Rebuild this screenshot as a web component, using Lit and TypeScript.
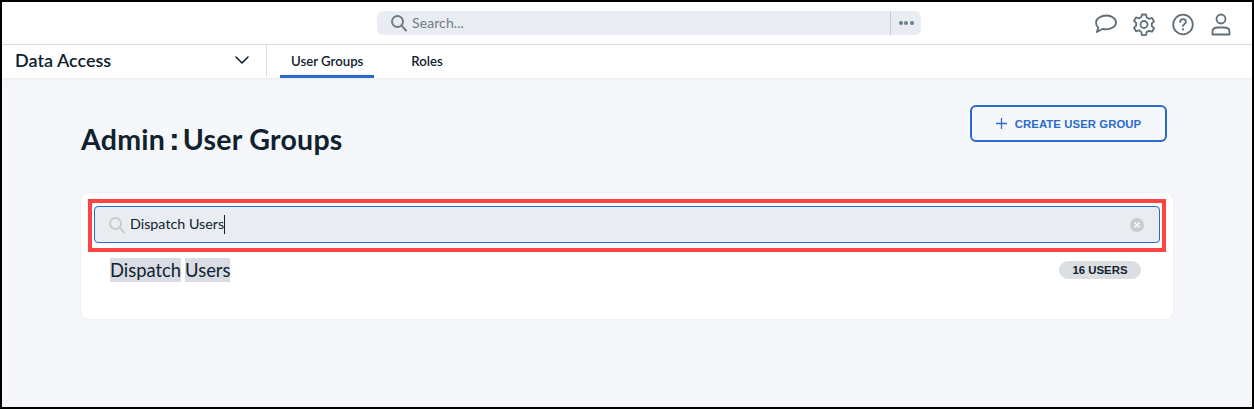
import { LitElement, html, css } from "lit";
import { customElement } from "lit/decorators.js";

@customElement("app-root")
export class AppRoot extends LitElement {
  static styles = css`
    :host { display: block; width: 1254px; height: 409px; box-sizing: border-box; border: 2px solid #000; background: #f5f7fb; font-family: "Lato", "Liberation Sans", sans-serif; color: #10222f; overflow: hidden; }
    .top { height: 42px; background: #fff; border-bottom: 1px solid #dcdfe2; display: grid; grid-template-columns: 375px 544px 1fr; align-items: start; }
    .search { grid-column: 2; height: 24px; margin-top: 9px; background: #e9edf2; border-radius: 6px; display: flex; align-items: center; color: #6e7c87; font-size: 14px; }
    .search .mag { margin-left: 13px; margin-right: 4px; }
    .search .ph { flex: 1; position: relative; top: -1px; letter-spacing: .1px; }
    .search .more { width: 31px; height: 24px; border-left: 1px solid #c8ccd0; box-sizing: border-box; display: flex; align-items: center; justify-content: center; gap: 1.5px; }
    .dot { width: 4px; height: 4px; border-radius: 50%; background: #6e7c87; }
    .icons { display: flex; justify-content: flex-end; gap: 14.5px; padding: 10px 19px 0 0; align-items: center; }
    .icons svg { display: block; }
    .sub { height: 33px; background: #fff; display: flex; box-shadow: 0 1px 2px rgba(0,0,0,.06); }
    .app { flex: none; width: 264px; padding-left: 13px; box-sizing: border-box; height: 29px; display: flex; justify-content: space-between; align-items: center; font-size: 18px; font-weight: 600; }
    .app svg { margin-right: 17px; }
    .tabs { border-left: 1px solid #dcdfe2; height: 32px; padding-left: 13px; display: flex; gap: 26px; flex: 1; }
    .tab { padding: 0 11px; height: 33px; box-sizing: border-box; font-size: 13.2px; font-weight: 600; display: flex; align-items: center; padding-bottom: 1px; }
    .tab.on { border-bottom: 3px solid #2a6bc9; padding: 1px 11px 0; }
    .main { padding: 27px 79px 0 78px; }
    .head { display: flex; justify-content: space-between; height: 88px; padding-right: 6px; }
    h1 { margin: 17px 0 0 1px; font-size: 28.5px; font-weight: 700; line-height: 34px; height: 34px; display: flex; align-items: baseline; letter-spacing: .25px; }
    h1 .sep { margin: 0 3px 0 4px; font-family: "Liberation Sans", sans-serif; font-weight: 700; font-size: 32px; line-height: 34px; letter-spacing: 0; }
    .btn { width: 197px; height: 37px; box-sizing: border-box; border: 2px solid #2a6bc9; border-radius: 6px; color: #2a6bc9; display: flex; align-items: center; justify-content: center; gap: 8px; font-family: "Liberation Sans", sans-serif; font-size: 11.3px; font-weight: 700; letter-spacing: .1px; }
    .card { position: relative; height: 126px; background: #fff; border-radius: 8px; box-shadow: 0 0 3px rgba(0,0,0,.07); padding: 13px 13px 0 13px; box-sizing: border-box; margin-left: 1px; }
    .input { height: 37px; box-sizing: border-box; border: 1px solid #2a6bc9; border-radius: 4px; background: #e9edf2; display: flex; align-items: center; padding: 0 15px 0 13px; font-size: 14.3px; }
    .input .val { flex: 1; margin-left: 4px; display: flex; align-items: center; line-height: 16px; padding-bottom: 1px; }
    .caret { width: 1px; height: 19px; background: #10222f; }
    .clear { width: 14px; height: 14px; border-radius: 50%; background: #c9cbcd; color: #fff; display: flex; align-items: center; justify-content: center; }
    .row { display: flex; justify-content: space-between; align-items: center; padding: 0 19px 0 16px; margin-top: 14px; height: 26px; }
    .name { font-size: 18.4px; display: flex; gap: 4px; line-height: 24px; }
    .name span { background: #d9dde3; }
    .pill { width: 82px; height: 18px; border-radius: 9px; background: #dcdfe2; display: flex; align-items: center; justify-content: center; font-family: "Liberation Sans", sans-serif; font-size: 11.4px; font-weight: 700; }
    .note { position: absolute; left: 7px; top: 6px; width: 1078px; height: 53px; box-sizing: border-box; border: 4px solid #ff4444; pointer-events: none; }
  `;

  render() {
    return html`
      <div class="top">
        <div class="search">
          <svg class="mag" width="18" height="18" viewBox="0 0 18 18" fill="none" stroke="#6e7c87" stroke-width="2" stroke-linecap="round"><circle cx="7.500" cy="7.500" r="5.500"/><path d="M11.600 11.600 16 16.500"/></svg>
          <span class="ph">Search...</span>
          <div class="more"><i class="dot"></i><i class="dot"></i><i class="dot"></i></div>
        </div>
        <div class="icons">
          <svg width="24" height="24" viewBox="0 0 24 24" fill="none" stroke="#5f6e79" stroke-width="1.800" stroke-linejoin="round"><path d="M12.500 3.500c5 0 9.500 2.900 9.500 6.900s-4.500 6.900-9.500 6.900c-1.300 0-2.500-.2-3.600-.5L2.800 20l1.600-4.400C2.700 14.300 2 12.400 2 10.400c0-4 5.500-6.900 10.500-6.900z"/></svg>
          <svg width="24" height="24" viewBox="0 0 24 24" fill="none" stroke="#5f6e79" stroke-width="1.800" stroke-linejoin="round"><path d="M10 2.500h4l.7 3 2.300 1.300 3-.9 2 3.500-2.200 2.100v2.600l2.200 2.100-2 3.500-3-.9-2.300 1.300-.7 3h-4l-.7-3L7 18.300l-3 .9-2-3.500 2.200-2.100v-2.600L2 8.900l2-3.500 3 .9 2.300-1.300z"/><circle cx="12" cy="12.500" r="3.500"/></svg>
          <svg width="24" height="24" viewBox="0 0 24 24" fill="none" stroke="#5f6e79" stroke-width="1.800" stroke-linecap="round"><circle cx="12" cy="12.500" r="9.800"/><path d="M9.200 10c0-1.700 1.300-2.800 2.900-2.800s2.800 1.100 2.800 2.500c0 2.200-2.900 2.300-2.900 4.400"/><path d="M12 17.300v.2" stroke-width="2.200"/></svg>
          <svg width="24" height="24" viewBox="0 0 24 24" fill="none" stroke="#5f6e79" stroke-width="1.800" stroke-linejoin="round"><circle cx="12" cy="7" r="4.500"/><path d="M3.500 22.500v-2.800c0-2.700 2.500-4.200 5.500-4.200h6c3 0 5.500 1.500 5.500 4.200v2.800z"/></svg>
        </div>
      </div>
      <div class="sub">
        <div class="app">Data Access
          <svg width="14" height="8" viewBox="0 0 14 8" fill="none" stroke="#10222f" stroke-width="1.600" stroke-linecap="round" stroke-linejoin="round"><path d="M1 1l6 6 6-6"/></svg>
        </div>
        <div class="tabs"><div class="tab on">User Groups</div><div class="tab">Roles</div></div>
      </div>
      <div class="main">
        <div class="head">
          <h1>Admin<span class="sep">:</span>User Groups</h1>
          <div class="btn">
            <svg width="11" height="11" viewBox="0 0 11 11" stroke="#2a6bc9" stroke-width="1.300"><path d="M5.500 0v11M0 5.500h11"/></svg>
            CREATE USER GROUP
          </div>
        </div>
        <div class="card">
          <div class="input">
            <svg width="18" height="18" viewBox="0 0 18 18" fill="none" stroke="#c9cbcd" stroke-width="2" stroke-linecap="round"><circle cx="7.500" cy="7.500" r="5.500"/><path d="M11.600 11.600 16 16.500"/></svg>
            <div class="val">Dispatch Users<i class="caret"></i></div>
            <div class="clear"><svg width="6" height="6" viewBox="0 0 6 6" stroke="#fff" stroke-width="1.300"><path d="M.5.500l5 5M5.500.500l-5 5"/></svg></div>
          </div>
          <div class="row">
            <div class="name"><span>Dispatch</span><span>Users</span></div>
            <div class="pill">16 USERS</div>
          </div>
          <div class="note"></div>
        </div>
      </div>
    `;
  }
}
